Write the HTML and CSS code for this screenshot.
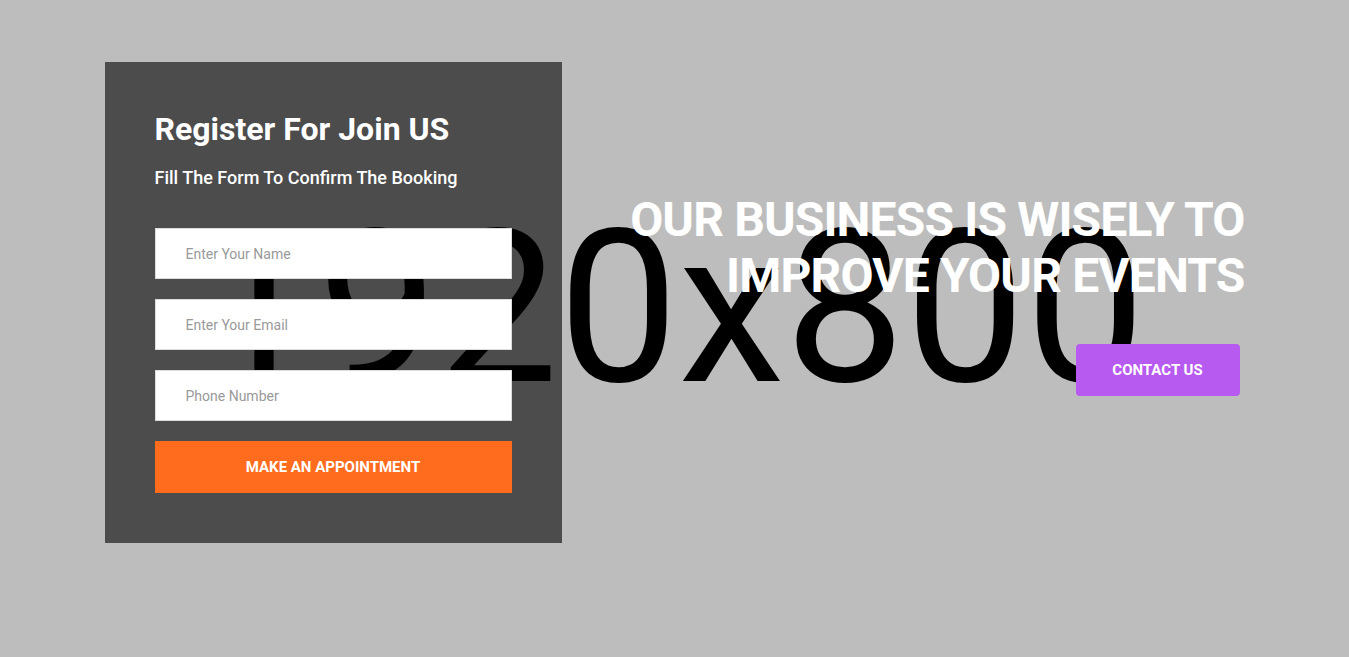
FILE: index.html
```html
<!DOCTYPE html>
<html lang="en">
<head>
<meta charset="utf-8">
<title>Register For Join US</title>
<link rel="stylesheet" href="styles.css">
</head>
<body>
<section class="hero">
  <div class="hero-bg" aria-hidden="true"><span class="placeholder-text">1920x800</span></div>
  <div class="container">
    <div class="form-panel">
      <h2 class="panel-title">Register For Join US</h2>
      <p class="panel-sub">Fill The Form To Confirm The Booking</p>
      <form class="form">
        <input class="field" type="text" placeholder="Enter Your Name">
        <input class="field" type="email" placeholder="Enter Your Email">
        <input class="field" type="tel" placeholder="Phone Number">
        <button class="btn-appoint" type="button">MAKE AN APPOINTMENT</button>
      </form>
    </div>
    <div class="hero-copy">
      <h1 class="hero-title">OUR BUSINESS IS WISELY TO<br>IMPROVE YOUR EVENTS</h1>
      <a class="btn-contact" href="#">CONTACT US</a>
    </div>
  </div>
</section>
</body>
</html>
```

FILE: styles.css
```css
* { box-sizing: border-box; }
html, body { margin: 0; padding: 0; }
body {
  font-family: Roboto, "Liberation Sans", Arial, sans-serif;
  background: #bdbdbd;
}
.hero {
  display: grid;
  grid-template-areas: "stack";
  height: 657px;
  background: #bdbdbd;
  overflow: hidden;
}
.hero-bg, .container { grid-area: stack; }
.hero-bg {
  display: flex;
  align-items: center;
  justify-content: center;
  padding-bottom: 41px;
  padding-right: 6px;
}
.placeholder-text {
  font-family: Roboto, "Liberation Sans", sans-serif;
  font-size: 214px;
  line-height: 1;
  font-weight: 400;
  color: #000;
  white-space: nowrap;
}
.container {
  width: 1140px;
  margin: 0 auto;
  display: flex;
  justify-content: space-between;
  align-items: flex-start;
  padding-top: 62px;
  position: relative;
}
.form-panel {
  width: 457px;
  background: rgba(0, 0, 0, 0.6);
  padding: 49px 50px 50px;
  color: #fff;
}
.panel-title {
  margin: 0;
  font-size: 32px;
  line-height: 36px;
  font-weight: 700;
}
.panel-sub {
  margin: 20px 0 0;
  font-size: 18px;
  line-height: 22px;
  font-weight: 500;
}
.form {
  margin-top: 39px;
  display: flex;
  flex-direction: column;
  gap: 20px;
}
.field {
  display: block;
  width: 100%;
  height: 51px;
  border: 1px solid #dcdcdc;
  background: #fff;
  padding: 0 20px 0 30px;
  font-family: Roboto, "Liberation Sans", sans-serif;
  font-size: 14px;
  color: #333;
  outline: none;
}
.field::placeholder { color: #999; }
.btn-appoint {
  height: 52px;
  border: 0;
  background: #ff6c1e;
  color: #fff;
  font-family: Roboto, "Liberation Sans", sans-serif;
  font-size: 15px;
  font-weight: 700;
  cursor: pointer;
}
.hero-copy {
  margin-top: 130px;
  display: flex;
  flex-direction: column;
  align-items: flex-end;
  text-align: right;
}
.hero-title {
  margin: 0;
  font-size: 48px;
  line-height: 56px;
  font-weight: 700;
  color: #fff;
  letter-spacing: -0.85px;
}
.btn-contact {
  margin-top: 40px;
  margin-right: 5px;
  display: inline-flex;
  align-items: center;
  justify-content: center;
  width: 164px;
  height: 52px;
  border-radius: 4px;
  background: #b75af0;
  color: #fff;
  text-decoration: none;
  font-size: 15px;
  font-weight: 700;
}
```
